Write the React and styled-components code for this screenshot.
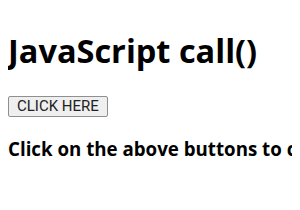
import React from 'react'
import styled, { createGlobalStyle } from 'styled-components'

const GlobalStyle = createGlobalStyle`
    body {
        margin: 8px;
        background: #fff;
        font-family: "Open Sans", "DejaVu Sans", sans-serif;
        color: #000;
    }
`
const Title = styled.h1`
    font-size: 32.5px;
    font-weight: bold;
    margin: 20px 0 21px;
`
const Button = styled.button`
    font-family: Roboto, "Liberation Sans", sans-serif;
    font-size: 15px;
    line-height: 17px;
    padding: 1px 8px;
    background: #efefef;
    border: 1px solid #8f8f8f;
    border-radius: 2px;
    color: #222;
`
const Result = styled.h3`
    font-size: 18.72px;
    font-weight: bold;
    margin: 19px 0;
    white-space: nowrap;
`

const App = () => {
    return (
        <>
            <GlobalStyle />
            <Title>JavaScript call()</Title>
            <Button>CLICK HERE</Button>
            <Result>Click on the above buttons to call the function</Result>
        </>
    )
}

export default App
